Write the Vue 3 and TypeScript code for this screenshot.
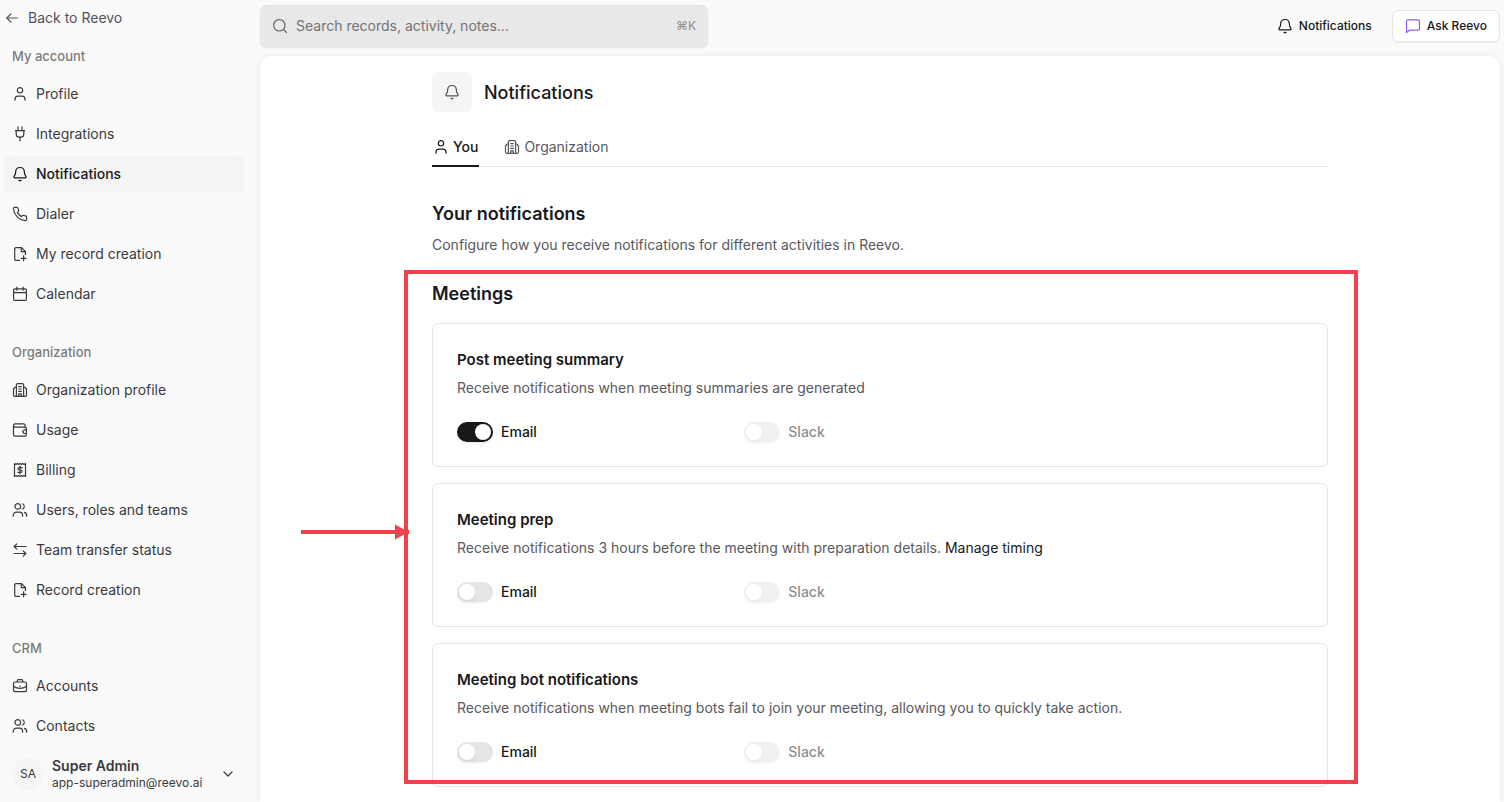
<script setup lang="ts">
import { defineComponent, h, reactive, ref } from 'vue'

type IconName =
  | 'back' | 'user' | 'plug' | 'bell' | 'phone' | 'filePlus' | 'calendar' | 'building'
  | 'wallet' | 'receipt' | 'users' | 'transfer' | 'briefcase' | 'search' | 'chat' | 'chevron'

const paths: Record<IconName, string[]> = {
  back: ['M13.5 8H3', 'M7 3.8 2.8 8 7 12.2'],
  user: ['M8 7a2.7 2.7 0 1 0 0-5.4A2.7 2.7 0 0 0 8 7Z', 'M3 14.2v-1a3 3 0 0 1 3-3h4a3 3 0 0 1 3 3v1'],
  plug: ['M6 .8v3.6', 'M10 .8v3.6', 'M3.4 4.6h9.2', 'M4.2 4.6v3.6a3 3 0 0 0 3 3h1.6a3 3 0 0 0 3-3V4.6', 'M8 11.2V15'],
  bell: ['M8 1.5A4.3 4.3 0 0 0 3.7 5.5L3.4 8 2 10.6c-.3.6.1 1.2.7 1.2h10.6c.6 0 1-.6.7-1.2L12.6 8l-.3-2.5A4.3 4.3 0 0 0 8 1.5Z', 'M6.9 14.3c.6.5 1.6.5 2.2 0'],
  phone: ['M14.6 11.3v2a1.33 1.33 0 0 1-1.45 1.33A13.2 13.2 0 0 1 1.4 2.8 1.33 1.33 0 0 1 2.73 1.35h2c.67 0 1.23.5 1.33 1.15.08.64.24 1.27.46 1.87.18.48.07 1.03-.3 1.4l-.84.85a10.7 10.7 0 0 0 4 4l.85-.85c.37-.36.92-.48 1.4-.3.6.22 1.23.38 1.87.47.66.1 1.12.67 1.1 1.36Z'],
  filePlus: ['M7.5 14.4H4a1.3 1.3 0 0 1-1.3-1.3V2.9A1.3 1.3 0 0 1 4 1.6h5.5l3.9 3.9v3', 'M9.3 1.8v3.9h3.9', 'M11.6 9.8v5', 'M9.1 12.3h5'],
  calendar: ['M2.8 2.8h10.4c.7 0 1.2.5 1.2 1.2v9.2c0 .7-.5 1.2-1.2 1.2H2.8c-.7 0-1.2-.5-1.2-1.2V4c0-.7.5-1.2 1.2-1.2Z', 'M1.6 6.6h12.8', 'M4.9 1v3.2', 'M11.1 1v3.2'],
  building: ['M4.4 14.4V3c0-.8.6-1.4 1.4-1.4h4.400c.8 0 1.400.6 1.400 1.400v11.400', 'M4.400 5H3.300L1.500 7v6c0 .8.6 1.400 1.400 1.400h10.200c.8 0 1.400-.6 1.400-1.400V7l-1.800-2h-1.100', 'M6.700 4.600h2.600', 'M6.700 7h2.600', 'M6.700 9.400h2.600', 'M6.700 14.400v-2.500h2.600v2.500'],
  wallet: ['M13 5.1V3.2c0-.8-.6-1.400-1.400-1.400H3.100c-.9 0-1.600.7-1.600 1.600', 'M1.500 3.400c0 .9.7 1.700 1.600 1.700h9.700c.9 0 1.600.7 1.600 1.600v5.900c0 .9-.7 1.600-1.600 1.600H3.100c-.9 0-1.600-.7-1.600-1.600V3.400', 'M14.400 7.900h-2.200l-1.700 1.800 1.700 1.800h2.200'],
  receipt: ['M2.500 1.500 4 2.400l1.300-.9 1.400.9L8 1.500l1.300.9 1.400-.9 1.300.9 1.500-.9v13l-1.500-.9-1.300.9-1.400-.9-1.300.9-1.300-.9-1.400.9-1.300-.9-1.500.9Z', 'M10.200 5.700H7.100a1.150 1.150 0 0 0 0 2.300h1.800a1.150 1.150 0 0 1 0 2.300H5.800', 'M8 4.300v7.400'],
  users: ['M5.8 7.200a2.800 2.800 0 1 0 0-5.600 2.800 2.800 0 0 0 0 5.600Z', 'M1.200 14.200v-.800a3.200 3.200 0 0 1 3.200-3.200h3a3.200 3.200 0 0 1 3.200 3.200v.8', 'M10.500 1.800a2.800 2.800 0 0 1 0 5.200', 'M12.400 10.300c1.400.4 2.300 1.600 2.300 3.100v.8'],
  transfer: ['M14 4.500H2.200', 'M4.800 1.900 2.200 4.500l2.600 2.600', 'M2 11.500h11.800', 'M11.200 8.900l2.600 2.600-2.600 2.600'],
  briefcase: ['M2.900 4h10.200c.8 0 1.400.6 1.400 1.400v6.900c0 .8-.6 1.400-1.400 1.400H2.900c-.8 0-1.400-.6-1.400-1.400V5.400C1.500 4.600 2.100 4 2.900 4Z', 'M5.200 4V2.900c0-.7.5-1.200 1.200-1.200h3.200c.7 0 1.200.5 1.200 1.200V4', 'M1.500 8.200c4 2.700 9 2.700 13 0', 'M8 8.200v.4'],
  search: ['M7.300 13a5.700 5.700 0 1 0 0-11.400A5.700 5.700 0 0 0 7.300 13Z', 'M11.500 11.500l3 3'],
  chat: ['M1.500 14.600V3.200c0-.8.6-1.400 1.400-1.400h10.200c.8 0 1.400.6 1.400 1.400v7.600c0 .8-.6 1.400-1.400 1.400H4.600Z'],
  chevron: ['M4 6l4 4 4-4'],
}

const Icon = defineComponent({
  props: { name: { type: String, required: true } },
  setup(props) {
    return () =>
      h(
        'svg',
        {
          width: 16, height: 16, viewBox: '0 0 16 16', fill: 'none', stroke: 'currentColor',
          'stroke-width': 1.2, 'stroke-linecap': 'round', 'stroke-linejoin': 'round', 'aria-hidden': 'true',
        },
        paths[props.name as IconName].map((d) => h('path', { d })),
      )
  },
})

interface NavItem { label: string; icon: IconName }
interface NavGroup { title: string; items: NavItem[] }

const groups: NavGroup[] = [
  {
    title: 'My account',
    items: [
      { label: 'Profile', icon: 'user' },
      { label: 'Integrations', icon: 'plug' },
      { label: 'Notifications', icon: 'bell' },
      { label: 'Dialer', icon: 'phone' },
      { label: 'My record creation', icon: 'filePlus' },
      { label: 'Calendar', icon: 'calendar' },
    ],
  },
  {
    title: 'Organization',
    items: [
      { label: 'Organization profile', icon: 'building' },
      { label: 'Usage', icon: 'wallet' },
      { label: 'Billing', icon: 'receipt' },
      { label: 'Users, roles and teams', icon: 'users' },
      { label: 'Team transfer status', icon: 'transfer' },
      { label: 'Record creation', icon: 'filePlus' },
    ],
  },
  {
    title: 'CRM',
    items: [
      { label: 'Accounts', icon: 'briefcase' },
      { label: 'Contacts', icon: 'users' },
    ],
  },
]

const current = ref('Notifications')
const tab = ref<'you' | 'org'>('you')
const query = ref('')

const settings = reactive([
  { id: 'summary', title: 'Post meeting summary', text: 'Receive notifications when meeting summaries are generated', link: '', email: true, slack: false },
  { id: 'prep', title: 'Meeting prep', text: 'Receive notifications 3 hours before the meeting with preparation details.', link: 'Manage timing', email: false, slack: false },
  { id: 'bot', title: 'Meeting bot notifications', text: 'Receive notifications when meeting bots fail to join your meeting, allowing you to quickly take action.', link: '', email: false, slack: false },
])
</script>

<template>
  <div class="app">
    <aside class="sidebar">
      <a class="back" href="#"><Icon name="back" />Back to Reevo</a>
      <nav class="nav" aria-label="Settings">
        <section v-for="g in groups" :key="g.title" class="group">
          <h2 class="group-title">{{ g.title }}</h2>
          <ul class="items">
            <li v-for="item in g.items" :key="item.label">
              <a href="#" class="item" :class="{ active: current === item.label }" @click.prevent="current = item.label">
                <Icon :name="item.icon" />{{ item.label }}
              </a>
            </li>
          </ul>
        </section>
      </nav>
      <button class="account" type="button">
        <span class="avatar">SA</span>
        <span class="who">
          <span class="name">Super Admin</span>
          <span class="mail">app-superadmin@reevo.ai</span>
        </span>
        <Icon name="chevron" />
      </button>
    </aside>

    <div class="main">
      <header class="topbar">
        <label class="search">
          <Icon name="search" />
          <input v-model="query" type="search" placeholder="Search records, activity, notes..." aria-label="Search" />
          <kbd>⌘K</kbd>
        </label>
        <div class="actions">
          <button class="action" type="button"><Icon name="bell" />Notifications</button>
          <button class="action ask" type="button"><Icon name="chat" />Ask Reevo</button>
        </div>
      </header>

      <main class="panel">
        <div class="content">
          <div class="page-head">
            <span class="page-icon"><Icon name="bell" /></span>
            <h1>Notifications</h1>
          </div>
          <div class="tabs" role="tablist">
            <button type="button" role="tab" class="tab" :class="{ on: tab === 'you' }" :aria-selected="tab === 'you'" @click="tab = 'you'">
              <Icon name="user" />You
            </button>
            <button type="button" role="tab" class="tab" :class="{ on: tab === 'org' }" :aria-selected="tab === 'org'" @click="tab = 'org'">
              <Icon name="building" />Organization
            </button>
          </div>
          <h2 class="heading">Your notifications</h2>
          <p class="lead">Configure how you receive notifications for different activities in Reevo.</p>

          <section class="meetings">
            <h2 class="heading">Meetings</h2>
            <article v-for="s in settings" :key="s.id" class="card">
              <h3>{{ s.title }}</h3>
              <p>{{ s.text }} <a v-if="s.link" href="#">{{ s.link }}</a></p>
              <div class="switches">
                <label class="switch" :for="s.id + '-email'">
                  <input :id="s.id + '-email'" v-model="s.email" type="checkbox" role="switch" />Email
                </label>
                <label class="switch off" :for="s.id + '-slack'">
                  <input :id="s.id + '-slack'" v-model="s.slack" type="checkbox" role="switch" disabled />Slack
                </label>
              </div>
            </article>
            <div class="frame" aria-hidden="true">
              <svg class="arrow" width="108" height="16" viewBox="0 0 108 16">
                <path d="M0 8H108" stroke="#f23f4c" stroke-width="4" />
                <path d="M94 0.500 108 8 94 15.500Z" fill="#ea4650" />
              </svg>
            </div>
          </section>
        </div>
      </main>
    </div>
  </div>
</template>

<style>
body {
  background: #fafafa;
}
</style>

<style scoped>
.app {
  display: flex;
  height: 100vh;
  overflow: hidden;
  background: #fafafa;
  color: #18181b;
  font-family: Inter, "Liberation Sans", sans-serif;
  font-size: 14px;
  line-height: 20px;
}
.app * {
  box-sizing: border-box;
}
svg {
  flex: none;
}
h1, h2, h3, p, ul {
  margin: 0;
  padding: 0;
}
a {
  color: inherit;
  text-decoration: none;
}
button, input, kbd {
  font: inherit;
  color: inherit;
}
button {
  border: 0;
  padding: 0;
  background: none;
  cursor: pointer;
}
.sidebar {
  flex: none;
  display: flex;
  flex-direction: column;
  width: 248px;
  padding: 0 4px;
}
.back {
  flex: none;
  display: flex;
  align-items: center;
  gap: 8px;
  height: 36px;
  color: #52525b;
}
.nav {
  flex: 1;
  min-height: 0;
  overflow: hidden;
}
.group {
  margin-bottom: 20px;
}
.group-title {
  padding: 10px 8px;
  color: #7c7c7c;
  font-size: 13px;
  font-weight: 500;
}
.items {
  display: grid;
  gap: 4px;
  list-style: none;
}
.item {
  display: flex;
  align-items: center;
  gap: 8px;
  height: 36px;
  padding: 0 8px;
  border-radius: 6px;
  color: #3a3a3d;
}
.item.active {
  background: #f4f4f4;
  color: #18181b;
  font-weight: 500;
}
.account {
  flex: none;
  display: flex;
  align-items: center;
  gap: 8px;
  height: 56px;
  padding: 0 8px;
  color: #3a3a3d;
  text-align: left;
}
.avatar {
  display: grid;
  place-items: center;
  width: 32px;
  height: 32px;
  border-radius: 50%;
  background: #f5f5f5;
  font-size: 12px;
}
.who {
  flex: 1;
  display: grid;
}
.name {
  line-height: 18px;
  font-weight: 600;
}
.mail {
  font-size: 12px;
  line-height: 16px;
}
.main {
  flex: 1;
  min-width: 0;
  display: flex;
  flex-direction: column;
  padding: 0 4px 0 12px;
}
.topbar {
  flex: none;
  display: flex;
  align-items: center;
  justify-content: space-between;
  height: 52px;
  margin-bottom: 4px;
}
.search {
  display: flex;
  align-items: center;
  gap: 8px;
  width: 448px;
  height: 42px;
  padding: 0 12px;
  border-radius: 6px;
  background: #e8e8e8;
  box-shadow: 0 1px 2px rgb(0 0 0 / 8%);
  color: #666;
}
.search input {
  flex: 1;
  min-width: 0;
  border: 0;
  padding: 0;
  outline: 0;
  background: none;
}
.search input::placeholder {
  color: #737373;
  opacity: 1;
}
.search kbd {
  color: #8c8c8c;
  font-size: 12px;
}
.actions {
  display: flex;
  gap: 8px;
}
.action {
  display: flex;
  align-items: center;
  gap: 6px;
  height: 32px;
  padding: 0 12px;
  font-size: 12px;
  font-weight: 500;
}
.ask {
  border: 1px solid #e5e5e5;
  border-radius: 6px;
  background: #fff;
  box-shadow: 0 1px 2px rgb(0 0 0 / 5%);
}
.ask svg {
  color: #8b5cf6;
}
.panel {
  flex: 1;
  min-height: 0;
  overflow: hidden;
  padding: 16px;
  border-radius: 12px 12px 0 0;
  background: #fff;
  box-shadow: 0 0 8px rgb(0 0 0 / 7%);
}
.content {
  max-width: 896px;
  margin: 0 auto;
}
.page-head {
  display: flex;
  align-items: center;
  gap: 12px;
}
.page-icon {
  display: grid;
  place-items: center;
  width: 40px;
  height: 40px;
  border-radius: 6px;
  background: #f5f5f5;
  color: #52525b;
}
h1 {
  font-size: 18px;
  font-weight: 500;
  line-height: 27px;
}
.tabs {
  display: flex;
  gap: 24px;
  height: 39px;
  margin-top: 16px;
  border-bottom: 1px solid #e5e5e5;
}
.tab {
  display: flex;
  align-items: center;
  gap: 4px;
  height: 39px;
  padding: 0 1px;
  border-bottom: 2px solid transparent;
  color: #58585c;
}
.tab.on {
  border-color: #18181b;
  color: #18181b;
  font-weight: 500;
}
.heading {
  font-size: 18px;
  font-weight: 600;
  line-height: 26px;
}
.tabs + .heading {
  margin-top: 34px;
}
.lead {
  margin-top: 8px;
  color: #58585c;
}
.meetings {
  position: relative;
  display: grid;
  gap: 16px;
  margin-top: 26px;
}
.card {
  padding: 24px;
  border: 1px solid #e5e5e5;
  border-radius: 6px;
}
h3 {
  font-size: 15px;
  font-weight: 600;
  line-height: 24px;
}
.card p {
  margin-top: 6px;
  color: #58585c;
}
.card p a {
  color: #18181b;
}
.switches {
  display: grid;
  grid-template-columns: repeat(3, 1fr);
  gap: 16px;
  margin-top: 24px;
}
.switch {
  display: flex;
  align-items: center;
  gap: 8px;
  font-weight: 500;
}
.switch input {
  appearance: none;
  display: flex;
  width: 36px;
  height: 20px;
  margin: 0;
  padding: 2px;
  border-radius: 10px;
  background: #e5e5e5;
  box-shadow: 0 1px 2px rgb(0 0 0 / 6%);
}
.switch input::before {
  content: "";
  width: 16px;
  height: 16px;
  border-radius: 50%;
  background: #fff;
  box-shadow: 0 4px 6px rgb(0 0 0 / 6%);
}
.switch input:checked {
  justify-content: flex-end;
  background: #18181b;
}
.off {
  opacity: 0.5;
}
.frame {
  position: absolute;
  top: -11px;
  right: -30px;
  bottom: 3px;
  left: -28px;
  border: 4px solid #f23f4c;
}
.arrow {
  position: absolute;
  top: 250px;
  left: -107px;
}
</style>
